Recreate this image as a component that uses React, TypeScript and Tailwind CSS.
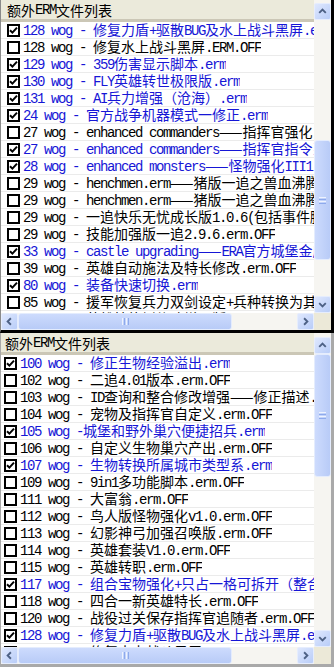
type Row = { on: boolean; text: string };

const topRows: Row[] = [
  { on: true, text: "128 wog - 修复力盾+驱散BUG及水上战斗黑屏.erm" },
  { on: false, text: "128 wog - 修复水上战斗黑屏.ERM.OFF" },
  { on: true, text: "129 wog - 359伤害显示脚本.erm" },
  { on: true, text: "130 wog - FLY英雄转世极限版.erm" },
  { on: true, text: "131 wog - AI兵力增强（沧海）.erm" },
  { on: true, text: "24 wog - 官方战争机器模式一修正.erm" },
  { on: false, text: "27 wog - enhanced commanders——指挥官强化.erm.OFF" },
  { on: true, text: "27 wog - enhanced commanders——指挥官指令系统.erm" },
  { on: true, text: "28 wog - enhanced monsters——怪物强化III1.2.erm" },
  { on: false, text: "29 wog - henchmen.erm——猪版一追之兽血沸腾.erm.OFF" },
  { on: false, text: "29 wog - henchmen.erm——猪版一追之兽血沸腾.erm.OFF" },
  { on: false, text: "29 wog - 一追快乐无忧成长版1.0.6(包括事件脚本).erm.OFF" },
  { on: false, text: "29 wog - 技能加强版一追2.9.6.erm.OFF" },
  { on: true, text: "33 wog - castle upgrading——ERA官方城堡金库.erm" },
  { on: false, text: "39 wog - 英雄自动施法及特长修改.erm.OFF" },
  { on: true, text: "80 wog - 装备快速切换.erm" },
  { on: false, text: "85 wog - 援军恢复兵力双剑设定+兵种转换为其他.erm.OFF" },
  { on: false, text: "86 wog - 英雄技能树修改增强版.erm.OFF" },
];

const bottomRows: Row[] = [
  { on: true, text: "100 wog - 修正生物经验溢出.erm" },
  { on: false, text: "102 wog - 二追4.01版本.erm.OFF" },
  { on: false, text: "103 wog - ID查询和整合修改增强——修正描述.erm.OFF" },
  { on: false, text: "104 wog - 宠物及指挥官自定义.erm.OFF" },
  { on: true, text: "105 wog -城堡和野外巢穴便捷招兵.erm" },
  { on: false, text: "106 wog - 自定义生物巢穴产出.erm.OFF" },
  { on: true, text: "107 wog - 生物转换所属城市类型系.erm" },
  { on: false, text: "109 wog - 9in1多功能脚本.erm.OFF" },
  { on: false, text: "111 wog - 大富翁.erm.OFF" },
  { on: false, text: "112 wog - 鸟人版怪物强化v1.0.erm.OFF" },
  { on: false, text: "113 wog - 幻影神弓加强召唤版.erm.OFF" },
  { on: false, text: "114 wog - 英雄套装V1.0.erm.OFF" },
  { on: false, text: "115 wog - 英雄转职.erm.OFF" },
  { on: true, text: "117 wog - 组合宝物强化+只占一格可拆开（整合版）.erm" },
  { on: false, text: "118 wog - 四合一新英雄特长.erm.OFF" },
  { on: false, text: "120 wog - 战役过关保存指挥官追随者.erm.OFF" },
  { on: true, text: "128 wog - 修复力盾+驱散BUG及水上战斗黑屏.erm" },
  { on: false, text: "128 wog - 修复水上战斗黑屏.ERM.OFF" },
];

// SimSun-like widths: latin half width (7px), CJK full width (14px)
function Txt({ s }: { s: string }) {
  const parts = s.match(/[\x00-\x7f]+|[^\x00-\x7f]+/g) ?? [];
  return (
    <>
      {parts.map((p, i) =>
        p.charCodeAt(0) < 128 ? (
          <span key={i} className="font-['Liberation_Mono',monospace] tracking-[-1.4px]">
            {p}
          </span>
        ) : (
          <span key={i} className="font-['Noto_Sans_CJK_SC',sans-serif]">
            {p}
          </span>
        )
      )}
    </>
  );
}

function Box({ on }: { on: boolean }) {
  return (
    <span className="flex h-[13px] w-[13px] shrink-0 items-center justify-center border-2 border-black bg-white">
      {on && (
        <svg width="9" height="9" viewBox="0 0 9 9">
          <path d="M1 4.2l2.4 2.4L8 1.6" stroke="#000" strokeWidth="2" fill="none" />
        </svg>
      )}
    </span>
  );
}

const arrows = {
  up: "M4.5 9.5l3.5-3.5 3.5 3.5",
  down: "M4.5 6.5l3.5 3.5 3.5-3.5",
  left: "M9.5 4.5l-3.5 3.5 3.5 3.5",
  right: "M6.5 4.5l3.5 3.5-3.5 3.5",
};

function SbBtn({ dir }: { dir: keyof typeof arrows }) {
  return (
    <div className="flex h-[17px] w-[17px] shrink-0 items-center justify-center rounded-[2px] border border-[#e6edfd] bg-linear-to-br from-[#dfe8fe] to-[#b9cdf8]">
      <svg width="15" height="15" viewBox="0 0 16 16">
        <path d={arrows[dir]} stroke="#4d6185" strokeWidth="2" fill="none" />
      </svg>
    </div>
  );
}

function VScroll({ pad, before, thumb }: { pad: string; before: string; thumb: string }) {
  return (
    <div className={`flex w-[17px] shrink-0 flex-col bg-[#f6f5f1] ${pad}`}>
      <SbBtn dir="up" />
      <div className={before} />
      <div
        className={`flex w-[17px] flex-col items-center justify-center gap-[1px] rounded-[3px] border border-[#e4ecfd] bg-linear-to-r from-[#cddbfd] to-[#b8cbf7] ${thumb}`}
      >
        <div className="h-[1px] w-[7px] bg-[#eef3fe]" />
        <div className="h-[1px] w-[7px] bg-[#8eaaec]" />
        <div className="h-[1px] w-[7px] bg-[#eef3fe]" />
        <div className="h-[1px] w-[7px] bg-[#8eaaec]" />
      </div>
      <div className="flex-1" />
      <SbBtn dir="down" />
    </div>
  );
}

function HScroll() {
  return (
    <div className="flex h-[17px] shrink-0">
      <div className="flex min-w-0 flex-1 bg-[#f6f5f1]">
        <SbBtn dir="left" />
        <div className="flex h-[17px] w-[214px] items-center justify-center gap-[1px] rounded-[3px] border border-[#e4ecfd] bg-linear-to-b from-[#cddbfd] to-[#b8cbf7]">
          <div className="h-[7px] w-[1px] bg-[#eef3fe]" />
          <div className="h-[7px] w-[1px] bg-[#8eaaec]" />
          <div className="h-[7px] w-[1px] bg-[#eef3fe]" />
          <div className="h-[7px] w-[1px] bg-[#8eaaec]" />
        </div>
        <div className="flex-1" />
        <SbBtn dir="right" />
      </div>
      <div className="w-[17px] bg-[#ece9d8]" />
    </div>
  );
}

function List({ rows, rowPad, headPad }: { rows: Row[]; rowPad: string; headPad: string }) {
  return (
    <div className="flex min-w-0 flex-1 flex-col bg-white">
      <div
        className={`flex h-[22px] shrink-0 items-center whitespace-pre border-b-[3px] border-[#cbc7b6] bg-[#ebeadb] pt-[2px] text-[14px] leading-[17px] text-black ${headPad}`}
      >
        <Txt s="额外ERM文件列表" />
      </div>
      <div className="min-h-0 flex-1 overflow-hidden">
        {rows.map((r, i) => (
          <div
            key={i}
            className={`flex h-[17px] items-center gap-[3px] overflow-hidden whitespace-pre border-b border-[#ebebeb] text-[14px] leading-[17px] ${rowPad} ${
              r.on ? "text-[#1616d6]" : "text-black"
            }`}
          >
            <Box on={r.on} />
            <span className="overflow-hidden">
              <Txt s={r.text} />
            </span>
          </div>
        ))}
      </div>
    </div>
  );
}

export default function App() {
  return (
    <div className="flex h-[667px] w-[334px] flex-col overflow-hidden bg-[#ece9d8]">
      <div className="flex h-[333px] shrink-0 flex-col border-b-[3px] border-l border-r-[3px] border-black border-l-[#8a8a8a]">
        <div className="flex min-h-0 flex-1">
          <List rows={topRows} rowPad="pl-[6px]" headPad="pl-[6px]" />
          <VScroll pad="pt-[3px]" before="h-[120px]" thumb="h-[120px]" />
        </div>
        <HScroll />
      </div>
      <div className="flex h-[334px] shrink-0 flex-col border-b-[3px] border-l border-r-[3px] border-[#a9a9a9]">
        <div className="flex min-h-0 flex-1">
          <List rows={bottomRows} rowPad="pl-[3px]" headPad="pl-[4px]" />
          <VScroll pad="pt-[4px]" before="h-0" thumb="h-[123px]" />
        </div>
        <HScroll />
      </div>
    </div>
  );
}
